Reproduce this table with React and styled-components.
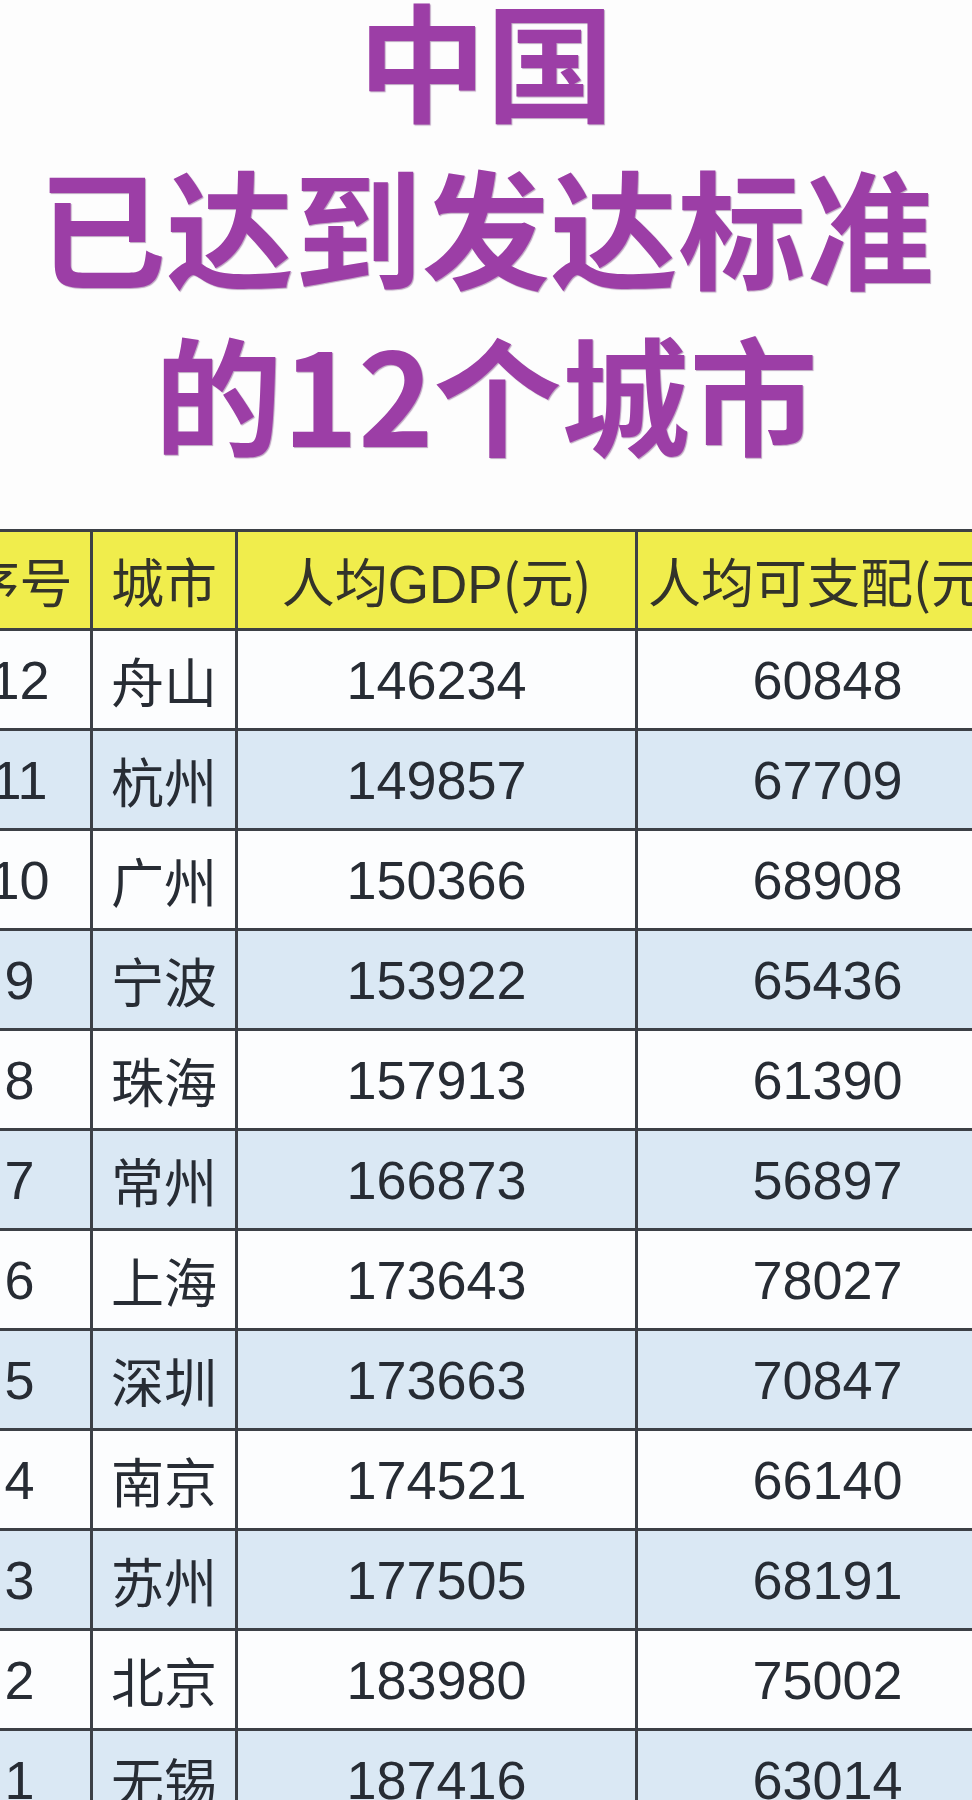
import React from 'react';
import styled, { createGlobalStyle } from 'styled-components';

const GlobalStyle = createGlobalStyle`
  html, body {
    margin: 0;
    padding: 0;
    background: #fdfdfd;
    overflow: hidden;
  }
  body {
    font-family: "Liberation Sans", "Noto Sans CJK SC", sans-serif;
  }
`;

const Page = styled.div`
  width: 972px;
  height: 1800px;
  overflow: hidden;
  background: #fdfdfd;
`;

const Title = styled.h1`
  margin: -26px 0 0;
  font-family: "Noto Sans CJK SC", sans-serif;
  font-weight: 700;
  font-size: 128px;
  line-height: 167px;
  color: #9c3ea6;
  text-align: center;
  white-space: nowrap;
  text-shadow: 1px 1px 1px rgba(90, 25, 100, 0.4);
`;

const TitleLine = styled.div`
  display: block;
`;

const TableWrap = styled.div`
  margin-top: ${({ $top }) => $top}px;
  margin-left: -54px;
`;

const Table = styled.table`
  border-collapse: collapse;
  table-layout: fixed;
  width: 1071px;
  color: #272c34;
`;

const Col = styled.col`
  width: ${({ $w }) => $w}px;
`;

const HeadCell = styled.th`
  height: 96px;
  padding: 0;
  padding-left: ${({ $left }) => ($left ? '10px' : '0')};
  background: #f0ed4c;
  border: 3px solid #3c4046;
  font-family: "Noto Sans CJK SC", sans-serif;
  font-weight: 400;
  font-size: 53px;
  color: #33332a;
  text-align: ${({ $left }) => ($left ? 'left' : 'center')};
  white-space: nowrap;
  overflow: hidden;
  vertical-align: middle;
`;

const Latin = styled.span`
  font-family: "Liberation Sans", sans-serif;
`;

const Row = styled.tr`
  background: ${({ $blue }) => ($blue ? '#dae8f4' : '#fcfdfe')};
`;

const Cell = styled.td`
  height: 97px;
  padding: 0;
  border: 3px solid #3c4046;
  text-align: center;
  vertical-align: middle;
  white-space: nowrap;
  font-family: ${({ $cjk }) =>
    $cjk ? '"Noto Sans CJK SC", sans-serif' : '"Liberation Sans", sans-serif'};
  font-size: ${({ $cjk }) => ($cjk ? '53px' : '54px')};
`;

const rows = [
  [12, '舟山', 146234, 60848],
  [11, '杭州', 149857, 67709],
  [10, '广州', 150366, 68908],
  [9, '宁波', 153922, 65436],
  [8, '珠海', 157913, 61390],
  [7, '常州', 166873, 56897],
  [6, '上海', 173643, 78027],
  [5, '深圳', 173663, 70847],
  [4, '南京', 174521, 66140],
  [3, '苏州', 177505, 68191],
  [2, '北京', 183980, 75002],
  [1, '无锡', 187416, 63014],
];

export default function App() {
  return (
    <Page>
      <GlobalStyle />
      <Title>
        <TitleLine>中国</TitleLine>
        <TitleLine>已达到发达标准</TitleLine>
        <TitleLine>的12个城市</TitleLine>
      </Title>
      <TableWrap $top={54}>
        <Table>
          <colgroup>
            <Col $w={144} />
            <Col $w={145} />
            <Col $w={400} />
            <Col $w={382} />
          </colgroup>
          <thead>
            <tr>
              <HeadCell>序号</HeadCell>
              <HeadCell>城市</HeadCell>
              <HeadCell>
                人均<Latin>GDP</Latin>(元)
              </HeadCell>
              <HeadCell $left>人均可支配(元)</HeadCell>
            </tr>
          </thead>
          <tbody>
            {rows.map((r, i) => (
              <Row key={r[0]} $blue={i % 2 === 1}>
                <Cell>{r[0]}</Cell>
                <Cell $cjk>{r[1]}</Cell>
                <Cell>{r[2]}</Cell>
                <Cell>{r[3]}</Cell>
              </Row>
            ))}
          </tbody>
        </Table>
      </TableWrap>
    </Page>
  );
}
